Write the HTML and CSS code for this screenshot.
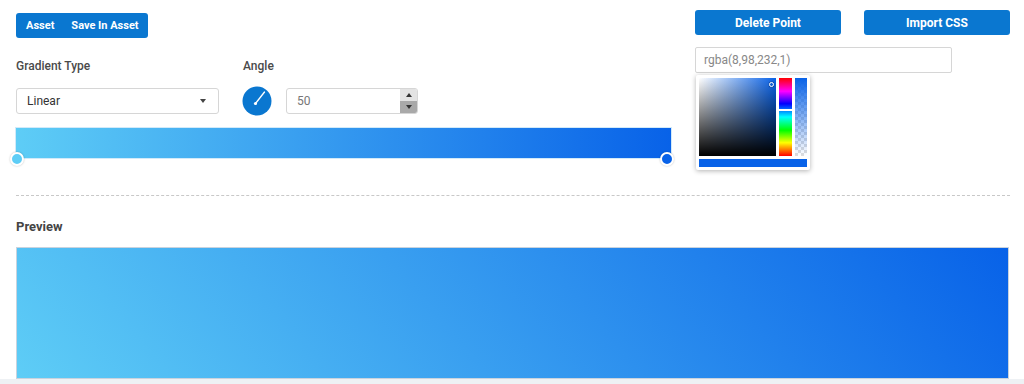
FILE: index.html
```html
<!DOCTYPE html>
<html lang="en">
<head>
    <meta charset="UTF-8">
    <meta name="viewport" content="width=device-width, initial-scale=1.0">
    <title>Gradient Generator</title>
    <link rel="stylesheet" href="styles.css">
</head>
<body>
    <div class="page">
        <div class="top">
            <div class="left-col">
                <div class="btn-group">
                    <button class="group-btn">Asset</button>
                    <button class="group-btn">Save In Asset</button>
                </div>

                <div class="labels">
                    <div class="label type-label">Gradient Type</div>
                    <div class="label">Angle</div>
                </div>

                <div class="controls">
                    <div class="select">
                        <span>Linear</span>
                        <span class="caret"></span>
                    </div>
                    <div class="angle-knob">
                        <svg width="30" height="30" viewBox="0 0 30 30">
                            <circle cx="15" cy="15" r="14.5" fill="#0a77d0"/>
                            <line x1="13.5" y1="17.5" x2="22.5" y2="6" stroke="#fff" stroke-width="1.3" stroke-linecap="round"/>
                            <circle cx="13.5" cy="17.5" r="1.6" fill="#fff"/>
                        </svg>
                    </div>
                    <div class="number-input">
                        <span class="num-value">50</span>
                        <div class="spinner">
                            <span class="spin-up"></span>
                            <span class="spin-down"></span>
                        </div>
                    </div>
                </div>

                <div class="gradient-bar">
                    <span class="handle handle-start"></span>
                    <span class="handle handle-end"></span>
                </div>
            </div>

            <div class="right-col">
                <div class="right-buttons">
                    <button class="action-btn">Delete Point</button>
                    <button class="action-btn">Import CSS</button>
                </div>
                <div class="color-input">rgba(8,98,232,1)</div>
                <div class="picker">
                    <div class="picker-main">
                        <div class="sat-box">
                            <span class="sat-pointer"></span>
                        </div>
                        <div class="hue-bar">
                            <span class="hue-marker"></span>
                        </div>
                        <div class="alpha-bar"></div>
                    </div>
                    <div class="picker-swatch"></div>
                </div>
            </div>
        </div>

        <div class="divider"></div>

        <div class="preview-title">Preview</div>
        <div class="preview"></div>
    </div>
    <div class="footer-strip"></div>
</body>
</html>
```

FILE: styles.css
```css
* {
    margin: 0;
    padding: 0;
    box-sizing: border-box;
}

body {
    font-family: 'Roboto', 'Liberation Sans', sans-serif;
    background: #fff;
    color: #444;
    overflow: hidden;
}

.page {
    padding: 10px 14px 0 16px;
}

.top {
    display: flex;
    gap: 24px;
    height: 165px;
}

.left-col {
    width: 655px;
}

/* Botones de la izquierda */
.btn-group {
    display: inline-flex;
    margin-top: 3px;
    height: 25px;
    background: #0a77d0;
    border-radius: 3px;
    padding: 0 9px 0 10px;
    gap: 17px;
    align-items: center;
}

.group-btn {
    background: none;
    border: none;
    color: #fff;
    font-family: inherit;
    font-weight: 700;
    font-size: 11px;
}

.labels {
    display: flex;
    margin-top: 20px;
    height: 16px;
    align-items: center;
}

.label {
    font-size: 12px;
    font-weight: 500;
    color: #4a4a4a;
}

.type-label {
    width: 227px;
}

.controls {
    display: flex;
    align-items: center;
    margin-top: 14px;
    height: 26px;
}

.select {
    width: 203px;
    height: 26px;
    border: 1px solid #d6d6d6;
    border-radius: 3px;
    display: flex;
    align-items: center;
    justify-content: space-between;
    padding: 0 12px 0 10px;
    font-size: 12px;
    color: #333;
}

.caret {
    width: 0;
    height: 0;
    border-left: 3.5px solid transparent;
    border-right: 3.5px solid transparent;
    border-top: 4px solid #444;
}

.angle-knob {
    margin-left: 23px;
    width: 30px;
    height: 30px;
}

.angle-knob svg {
    display: block;
}

.number-input {
    margin-left: 14px;
    width: 132px;
    height: 26px;
    border: 1px solid #d6d6d6;
    border-radius: 3px;
    display: flex;
    justify-content: space-between;
    align-items: stretch;
    padding-left: 10px;
    overflow: hidden;
}

.num-value {
    font-size: 12px;
    color: #777;
    align-self: center;
}

.spinner {
    width: 17px;
    display: flex;
    flex-direction: column;
}

.spin-up, .spin-down {
    flex: 1;
    display: flex;
    align-items: center;
    justify-content: center;
}

.spin-up {
    background: #e3e3e3;
}

.spin-down {
    background: #a9a9a9;
}

.spin-up::after {
    content: '';
    border-left: 3.5px solid transparent;
    border-right: 3.5px solid transparent;
    border-bottom: 4px solid #333;
}

.spin-down::after {
    content: '';
    border-left: 3.5px solid transparent;
    border-right: 3.5px solid transparent;
    border-top: 4px solid #333;
}

.gradient-bar {
    position: relative;
    margin-top: 14px;
    width: 655px;
    height: 30px;
    background: linear-gradient(to right, #5ecdf6, #0862e8);
    box-shadow: 0 0 0 1px rgba(180, 220, 245, 0.6);
}

.handle {
    position: absolute;
    top: 24px;
    width: 14px;
    height: 14px;
    border-radius: 50%;
    border: 2px solid #fff;
    box-shadow: 0 0 2px rgba(0, 0, 0, 0.25);
}

.handle-start {
    left: -6px;
    background: #5ecdf6;
}

.handle-end {
    right: -3px;
    top: 24px;
    background: #0862e8;
}

/* Columna derecha */
.right-col {
    width: 315px;
}

.right-buttons {
    display: flex;
    gap: 23px;
}

.action-btn {
    width: 146px;
    height: 25px;
    background: #0a77d0;
    border: none;
    border-radius: 3px;
    color: #fff;
    font-family: inherit;
    font-weight: 700;
    font-size: 12px;
}

.color-input {
    margin-top: 12px;
    width: 257px;
    height: 26px;
    border: 1px solid #d6d6d6;
    border-radius: 2px;
    padding-left: 8px;
    display: flex;
    align-items: center;
    font-size: 12px;
    color: #888;
}

.picker {
    margin-left: 1px;
    margin-top: 2px;
    width: 114px;
    height: 95px;
    background: #fff;
    border-radius: 2px;
    box-shadow: 0 1px 5px rgba(0, 0, 0, 0.3);
    padding: 3px;
}

.picker-main {
    display: flex;
    gap: 3px;
    height: 78px;
}

.sat-box {
    position: relative;
    width: 77px;
    background:
        linear-gradient(to top, #000, rgba(0, 0, 0, 0)),
        linear-gradient(to right, #fff, hsl(216, 93%, 47%));
}

.sat-pointer {
    position: absolute;
    top: 4px;
    right: 2px;
    width: 5px;
    height: 5px;
    border: 1px solid #fff;
    border-radius: 50%;
    box-shadow: 0 0 1px #000;
}

.hue-bar {
    position: relative;
    width: 13px;
    background: linear-gradient(to bottom, #ff0000 0%, #ff00ff 17%, #0000ff 33%, #00ffff 50%, #00ff00 67%, #ffff00 83%, #ff0000 100%);
}

.hue-marker {
    position: absolute;
    left: 0;
    right: 0;
    top: 31px;
    height: 2px;
    background: #fff;
}

.alpha-bar {
    width: 12px;
    background:
        linear-gradient(to bottom, #0862e8, rgba(8, 98, 232, 0)),
        repeating-conic-gradient(#ddd 0 25%, #fff 0 50%) 0 0 / 6px 6px;
}

.picker-swatch {
    margin-top: 3px;
    height: 8px;
    background: #0862e8;
}

.divider {
    margin-top: 20px;
    height: 0;
    border-top: 1px dashed #c8c8c8;
    width: 994px;
}

.preview-title {
    margin-top: 23px;
    font-size: 13px;
    font-weight: 700;
    color: #444;
}

.preview {
    margin-top: 13px;
    width: 993px;
    height: 132px;
    border: 1px solid #c9d3de;
    background: linear-gradient(50deg, #5ecdf6, #0862e8);
}

.footer-strip {
    height: 10px;
    background: #eef1f4;
}
```
